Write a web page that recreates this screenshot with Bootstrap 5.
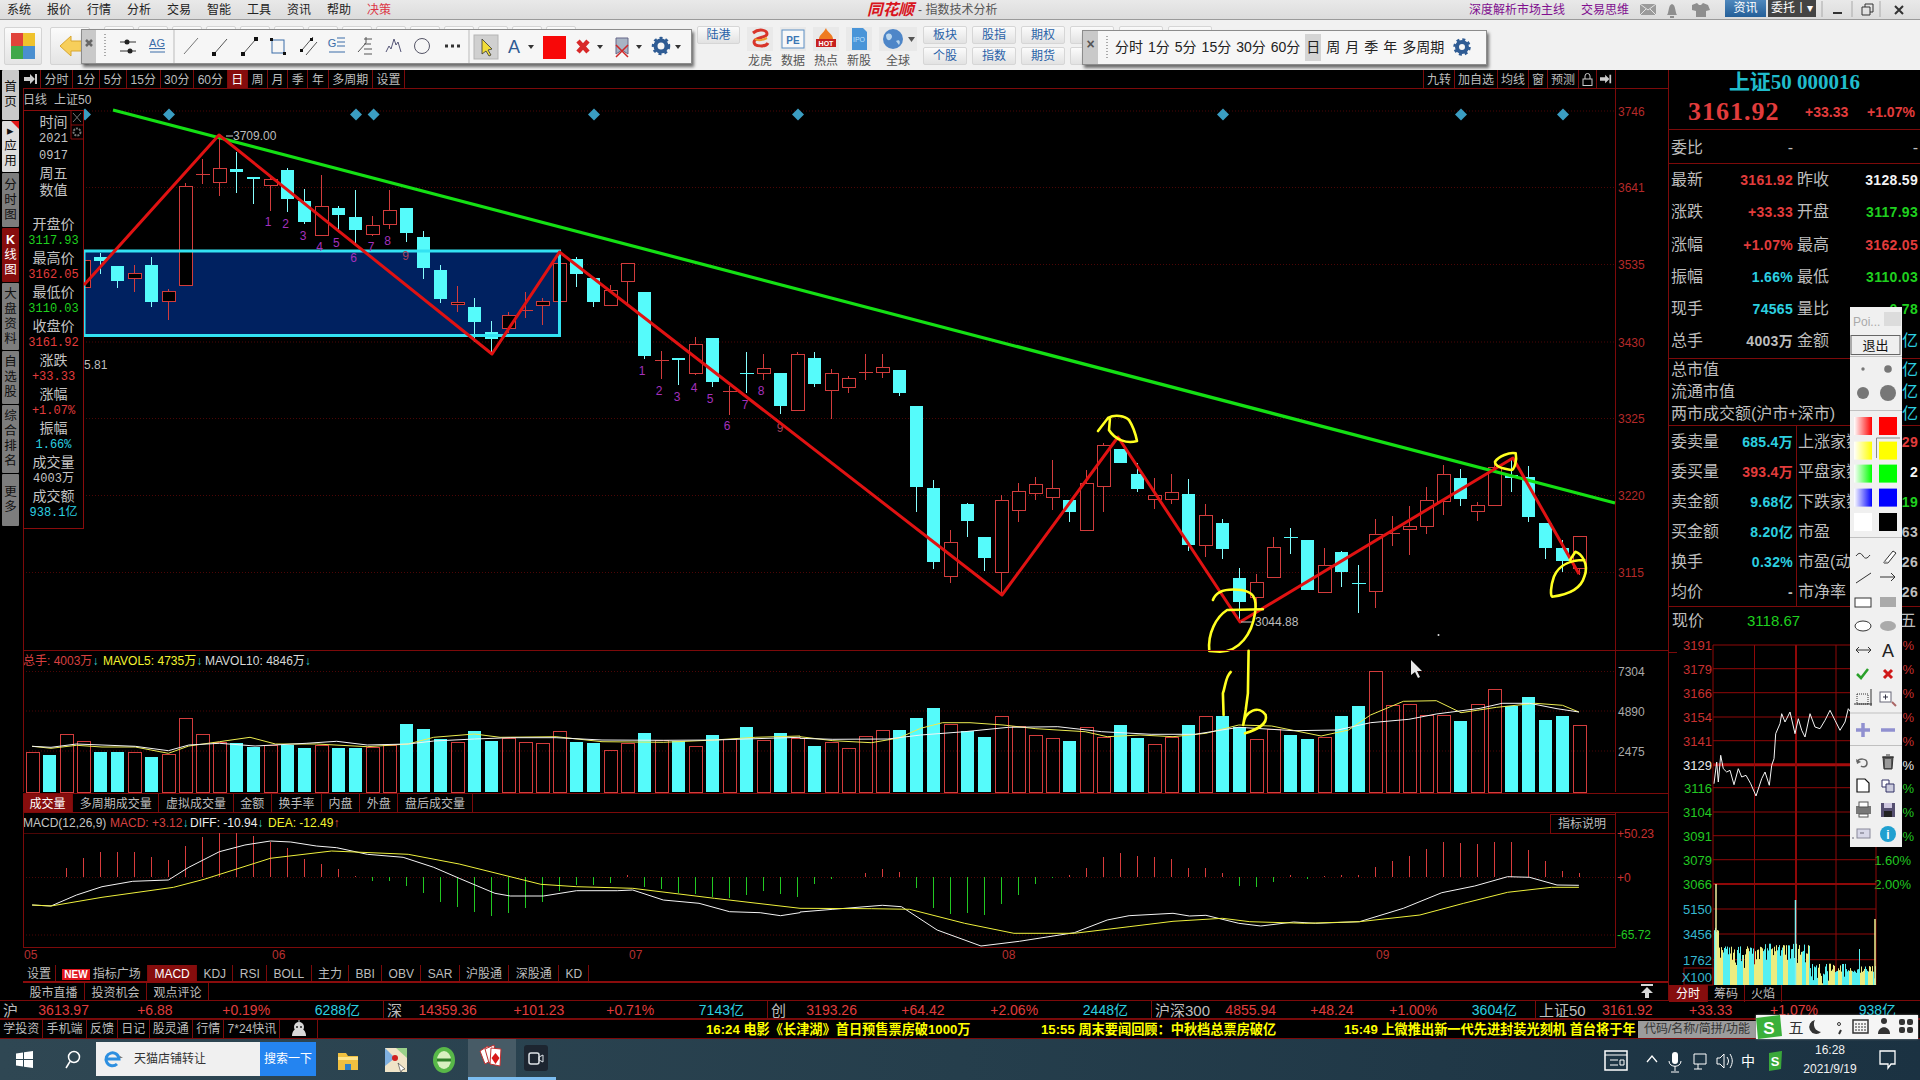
<!doctype html>
<html lang="zh-CN">
<head>
<meta charset="utf-8">
<title>同花顺 - 指数技术分析</title>
<link rel="stylesheet" href="https://cdn.jsdelivr.net/npm/bootstrap@5.3.0/dist/css/bootstrap.min.css">
<style>
:root{--sk-red:#e23c3c;--sk-line:#7c0a0a;--sk-cyan:#2cd0e0;--sk-green:#1fd01f;--sk-grey:#bdbdbd}
html,body{margin:0;height:100%;overflow:hidden;background:#000}
body{font:12px/1.2 "Liberation Sans","Noto Sans CJK SC",sans-serif;color:var(--sk-grey);position:relative}
.sk-shell{width:1920px;height:1080px}
svg{display:block;overflow:visible}
svg text{font-family:"Liberation Sans","Noto Sans CJK SC",sans-serif}
/* menu */
.sk-menu{height:20px;background:linear-gradient(#e9e9e9,#dcdcdc);border-bottom:1px solid #9a9a9a;color:#222;padding-left:7px;line-height:21px}
.sk-menu .sk-mi{width:40px;flex:none}
.sk-title{position:absolute;left:867px;top:0;height:20px;line-height:20px;color:#555;white-space:nowrap;display:flex;align-items:center}
.sk-logo{font:italic bold 15.7px/18px "Liberation Sans","Noto Sans CJK SC",sans-serif;color:#d8141c;margin-right:4px}
.sk-mright{margin-left:auto;color:#800f8f}
.sk-bt-b{width:41px;height:17px;line-height:17px;text-align:center;color:#fff;background:linear-gradient(#4f88bd,#245f98);margin-left:8px}
.sk-bt-d{width:48px;height:17px;line-height:17px;text-align:center;color:#fff;background:#444;margin-left:2px}
/* toolbar */
.sk-tools{height:50px;background:#f1f1f1;position:relative}
.sk-tbtn{border:1px solid #d4d4d4;border-radius:2px;background:linear-gradient(#fbfbfb,#e4e4e4);flex:none}
.sk-sbtn{height:18px;line-height:16px;text-align:center;color:#2a62a8;font-size:12px;background:linear-gradient(#fbfbfb,#e2e2e2);border:1px solid #d6d6d6;border-radius:2px}
.sk-btngrid{display:grid;grid-template-columns:repeat(6,44px);gap:3px 5px}
.sk-icol{width:26px;flex:none;text-align:center;color:#555;line-height:14px}
.sk-icol svg{margin-bottom:3px}
.sk-float{position:absolute;background:#f6f6f6;box-shadow:2px 3px 3px rgba(0,0,0,.55);border:1px solid #8c8c8c;z-index:5}
.sk-fclose{width:15px;background:#c9c9c9;color:#555;font-weight:700;font-size:14px;text-align:center;line-height:26px;flex:none}
.sk-fitem{font-size:14px;color:#222;white-space:nowrap}
.sk-fsel{background:#d4d4d4;padding:5px 1px}
.sk-grip{margin:0 6px 0 8px}
/* side */
.sk-side{width:19px;flex:none}
.sk-vt{width:17px;margin-left:2px;margin-bottom:1px;background:#7d7d7d;color:#111;font-size:12.5px;line-height:15px;text-align:center;display:flex;align-items:center;justify-content:center;border-radius:1px;flex:none;position:relative}
.sk-vt-l{background:#c9c9c9}
.sk-vt-w{background:#dcdcdc}
.sk-vt-w::after{content:"";position:absolute;right:0;top:0;border:4px solid transparent;border-top-color:#e01818;border-right-color:#e01818}
.sk-vt-r{background:#860d0d;color:#fff}
/* tabs */
.sk-center{width:1649px;flex:none;position:relative}
.sk-tabs{height:19px;line-height:18px;margin-left:4px;color:#bdbdbd;white-space:nowrap}
.sk-tabs>span{border-right:1px solid var(--sk-line);display:block;height:100%;flex:none}
.sk-tb-top{border-bottom:1px solid var(--sk-line);line-height:20px}
.sk-tb-top>span{padding:0 3.6px}
.sk-tb-top>span:first-child{padding:0 2px 0 1px}
.sk-tr{margin-left:auto;margin-right:52px;border-left:1px solid var(--sk-line)}
.sk-tr>span{padding:0 3px;border-right:1px solid var(--sk-line)}
.sk-tb-mid{height:20px;border-top:1px solid var(--sk-line);border-bottom:1px solid var(--sk-line);line-height:20px}
.sk-tb-mid>span{padding:0 6.6px}
.sk-tb-low{height:18px;border-bottom:2px solid #8a0c0c}
.sk-tb-low>span{padding:0 6.35px}
.sk-tb-low>span:first-child{padding:0 4px}
.sk-tb-bot{height:17px;line-height:20px}
.sk-tb-bot>span{padding:0 6.5px}
.sk-up{margin-right:13px}
.sk-on{background:#860d0d;color:#fff}
.sk-new{background:#e0141c;color:#fff;font-size:10px;padding:0 2px;margin-right:3px}
/* info box */
.sk-info{position:absolute;left:4px;top:40px;width:61px;height:419px;border:1px solid #8a0c0c;border-left-width:1px;background:#000;z-index:2;text-align:center;padding:3px 0 0 0;font-size:14px;line-height:17px;color:#c4c4c4}
.sk-info div{height:17px;white-space:nowrap}
.sk-info .sk-n{font:12px/17px "Liberation Mono","Noto Sans CJK SC",monospace}
.sk-gap{height:17px}
.sk-cx{position:absolute;right:0;top:0;width:12px;height:28px}
/* right panel */
.sk-panel{width:252px;flex:none;border-left:1px solid var(--sk-line);position:relative;font-size:16px;color:var(--sk-grey)}
.sk-ptitle{height:25px;line-height:25px;text-align:center;font:bold 21px/25px "Liberation Serif","Noto Sans CJK SC",serif;color:#20bccb}
.sk-price{height:35px;border-bottom:1px solid var(--sk-line);color:var(--sk-red);font:bold 14px/38px "Liberation Sans",sans-serif;padding-left:19px;align-items:center}
.sk-bigp{font:bold 26px/38px "Liberation Serif",serif;letter-spacing:1px;width:117px;flex:none}
.sk-hline{border-bottom:1px solid var(--sk-line)}
.sk-qr{height:32.3px;line-height:32px}
.sk-qr1{height:34px;line-height:36px}
.sk-qr3{height:30px;line-height:32px}
.sk-lh{width:127px;flex:none;padding:0 3px 0 2px}
.sk-rh{flex:1;padding:0 2px 0 1px}
.sk-dv{border-left:1px solid var(--sk-line)}
.sk-v{font:bold 14px "Liberation Sans","Noto Sans CJK SC",sans-serif;line-height:inherit;letter-spacing:.3px;white-space:nowrap}
.sk-line22{height:22px;line-height:22px;padding-left:2px}
.sk-red{color:var(--sk-red)}.sk-grn{color:var(--sk-green)}.sk-cy{color:var(--sk-cyan)}.sk-wh{color:#f4f4f4}
.sk-xj{height:25px;line-height:28px;padding-left:3px}
.sk-ptabs{height:17px;line-height:18px;font-size:12px;white-space:nowrap}
.sk-ptabs>span{padding:0 6px;border-right:1px solid var(--sk-line)}
/* ticker */
.sk-tick{height:20px;border-top:1px solid var(--sk-line);border-bottom:2px solid #7a0a0a;font-size:14px;line-height:19px;color:var(--sk-red);white-space:nowrap}
.sk-tg{width:384px;flex:none;border-right:1px solid var(--sk-line);padding-left:3px}
.sk-tg:last-child{border-right:0;width:383px}
.sk-tg>span{flex:1 1 0;text-align:center}
.sk-tg>.sk-tl{flex:none;color:#bdbdbd;font-size:15px;text-align:left}
.sk-news{height:19px;border-bottom:1px solid var(--sk-line);line-height:19px;white-space:nowrap;position:relative}
.sk-nbtn>span{padding:0 3.2px;border-right:1px solid var(--sk-line);height:18px;display:block}
.sk-nitem{color:#ffff00;font-size:13.2px;font-weight:700;position:absolute;top:0}
.sk-code{position:absolute;left:1638px;top:1px;width:215px;height:17px;background:#9c9c9c;color:#333;font-size:12px;line-height:17px;padding-left:6px}
/* task bar */
.sk-task{height:41px;background:linear-gradient(90deg,#2f4753,#253e4c 50%,#1b3242);color:#f1f1f1;position:relative}
.sk-search{width:164px;height:34px;background:#f0f0f0;margin-top:3px;color:#333;line-height:34px;padding-left:38px;flex:none;position:relative}
.sk-sgo{width:56px;height:34px;background:#2484f0;color:#fff;text-align:center;line-height:34px;margin-top:3px;flex:none}
.sk-ticon{width:48px;height:41px;flex:none;display:flex;align-items:center;justify-content:center;position:relative}
.sk-act{background:#475b66;border-bottom:3px solid #7cbdf0}
.sk-und{border-bottom:3px solid #7cbdf0}
.sk-clock{position:absolute;left:1800px;top:2px;width:60px;text-align:center;line-height:19px;font-size:12px}
/* overlays */
.sk-pal{position:absolute;left:1850px;top:307px;width:52px;height:540px;background:#f0f0f0;z-index:6}
.sk-ime{position:absolute;left:1756px;top:1015px;width:162px;height:24px;background:#f5f5f5;z-index:7;box-shadow:0 0 2px #888}
.sk-cur{position:absolute;left:1410px;top:660px;z-index:8}
</style>
</head>
<body>
<div class="sk-shell d-flex flex-column">
  <header class="sk-menu d-flex">
    <span class="sk-mi">系统</span><span class="sk-mi">报价</span><span class="sk-mi">行情</span><span class="sk-mi">分析</span><span class="sk-mi">交易</span><span class="sk-mi">智能</span><span class="sk-mi">工具</span><span class="sk-mi">资讯</span><span class="sk-mi">帮助</span><span class="sk-mi text-danger">决策</span>
    <div class="sk-title"><span class="sk-logo">同花顺</span>- 指数技术分析</div>
    <div class="sk-mright d-flex">
      <span>深度解析市场主线</span><span class="ms-3">交易思维</span>
      <svg class="ms-1" width="84" height="18" viewBox="-5 0 84 18"><rect x="2" y="4" width="16" height="11" fill="#9b9b9b"/><path d="M2 4l8 6 8-6M2 15l6-6M18 15l-6-6" stroke="#e4e4e4" fill="none"/><path d="M29 15c2-2 1-10 5-11 4 1 3 9 5 11zM32 16h4v2h-4z" fill="#8e8e8e"/><path d="M54 5l5-2 2 2h2l2-2 5 2 2 5-4 1v6H58v-6l-4-1z" fill="#8e8e8e"/></svg>
      <span class="sk-bt-b">资讯</span><span class="sk-bt-d">委托丨▾</span>
      <svg width="104" height="19" viewBox="0 0 104 19"><path d="M6 1v16M36 1v16M64 1v16" stroke="#aaa"/><path d="M17 13h9" stroke="#333" stroke-width="2"/><path d="M46 7h8v8h-8zM49 7V4h8v8h-3" fill="none" stroke="#333"/><path d="M79 6l8 8M87 6l-8 8" stroke="#333" stroke-width="2"/></svg>
    </div>
  </header>

  <div class="sk-tools d-flex align-items-start">
    <div class="sk-tbtn d-flex align-items-center justify-content-center" style="width:38px;height:38px;margin:7px 0 0 4px">
      <svg width="24" height="26" viewBox="0 0 24 26"><rect width="12" height="13" fill="#e0433a"/><rect x="12" width="12" height="13" fill="#efc22c"/><rect y="13" width="12" height="13" fill="#3fa84a"/><rect x="12" y="13" width="12" height="13" fill="#4a8fd0"/></svg>
    </div>
    <div class="sk-tbtn d-flex align-items-center ps-2" style="width:40px;height:38px;margin:7px 0 0 8px">
      <svg width="24" height="22" viewBox="0 0 24 22"><path d="M1 11L12 1v5h11v10H12v5z" fill="#f7cf5b" stroke="#d8a630"/></svg>
    </div>
    <div class="d-flex" style="gap:4px;margin:6px 0 0 14px;width:586px">
      <span class="sk-tbtn" style="width:30px;height:30px"></span><span class="sk-tbtn" style="width:30px;height:30px"></span><span class="sk-tbtn" style="width:30px;height:30px"></span><span class="sk-tbtn" style="width:30px;height:30px"></span><span class="sk-tbtn" style="width:30px;height:30px"></span><span class="sk-tbtn" style="width:30px;height:30px"></span><span class="sk-tbtn" style="width:30px;height:30px"></span><span class="sk-tbtn" style="width:30px;height:30px"></span><span class="sk-tbtn" style="width:30px;height:30px"></span><span class="sk-tbtn" style="width:30px;height:30px"></span><span class="sk-tbtn" style="width:30px;height:30px"></span><span class="sk-tbtn" style="width:30px;height:30px"></span><span class="sk-tbtn" style="width:30px;height:30px"></span><span class="sk-tbtn" style="width:30px;height:30px"></span>
    </div>
    <div class="sk-sbtn" style="width:43px;margin:6px 0 0 7px">陆港</div>
    <div class="d-flex" style="gap:7px;margin:7px 0 0 7px">
      <div class="sk-icol"><svg width="26" height="24" viewBox="0 0 26 24"><rect width="26" height="24" fill="#e9e9e9"/><path d="M6 6c6-5 14-3 14 1s-13 3-13 8 12 5 14 1" fill="none" stroke="#d8352a" stroke-width="3"/><path d="M8 12c4 3 10 0 12-1" stroke="#eda030" stroke-width="2" fill="none"/></svg>龙虎</div>
      <div class="sk-icol"><svg width="26" height="24" viewBox="0 0 26 24"><rect width="26" height="24" fill="#e9e9e9"/><rect x="2" y="3" width="22" height="18" fill="#f8f8f8" stroke="#5d8fc4"/><text x="13" y="17" text-anchor="middle" font-size="10" font-weight="700" fill="#3a76b4">PE</text></svg>数据</div>
      <div class="sk-icol"><svg width="26" height="24" viewBox="0 0 26 24"><rect width="26" height="24" fill="#e9e9e9"/><path d="M13 1c1 4 7 6 7 11H6c0-4 4-5 7-11z" fill="#ef7b22"/><rect x="3" y="12" width="20" height="8" fill="#c7201e"/><text x="13" y="19" text-anchor="middle" font-size="7" font-weight="700" fill="#fff">HOT</text></svg>热点</div>
      <div class="sk-icol"><svg width="26" height="24" viewBox="0 0 26 24"><rect width="26" height="24" fill="#e9e9e9"/><path d="M6 1h11l4 4v18H6z" fill="#4a95d8"/><text x="13" y="15" text-anchor="middle" font-size="7" fill="#bfe3ff">IPO</text></svg>新股</div>
      <div class="sk-icol" style="width:38px"><svg width="38" height="24" viewBox="0 0 38 24"><rect width="38" height="24" fill="#e9e9e9"/><circle cx="14" cy="12" r="10" fill="#4e86c8"/><path d="M7 8c4-4 8 1 5 4s-5 0-5-4zM17 14c3-2 5 0 3 4z" fill="#b9d6ee"/><path d="M29 10h7l-3.500 5z" fill="#555"/></svg>全球</div>
    </div>
    <div class="sk-btngrid" style="margin:6px 0 0 6px">
      <span class="sk-sbtn">板块</span><span class="sk-sbtn">股指</span><span class="sk-sbtn">期权</span><span class="sk-sbtn"></span><span class="sk-sbtn"></span><span class="sk-sbtn"></span>
      <span class="sk-sbtn">个股</span><span class="sk-sbtn">指数</span><span class="sk-sbtn">期货</span><span class="sk-sbtn"></span><span class="sk-sbtn"></span><span class="sk-sbtn"></span>
    </div>
  </div>

  <main class="d-flex" style="height:930px">
    <nav class="sk-side d-flex flex-column">
      <div class="sk-vt sk-vt-l" style="height:50px">首<br>页</div>
      <div class="sk-vt sk-vt-w" style="height:51px"><span>▸<br>应<br>用</span></div>
      <div class="sk-vt" style="height:54px">分<br>时<br>图</div>
      <div class="sk-vt sk-vt-r" style="height:54px"><span><b>K</b><br>线<br>图</span></div>
      <div class="sk-vt" style="height:67px">大<br>盘<br>资<br>料</div>
      <div class="sk-vt" style="height:53px">自<br>选<br>股</div>
      <div class="sk-vt" style="height:68px">综<br>合<br>排<br>名</div>
      <div class="sk-vt" style="height:52px">更<br>多</div>
    </nav>

    <section class="sk-center d-flex flex-column">
      <div class="sk-tabs sk-tb-top d-flex">
        <span class="d-flex align-items-center"><svg width="14" height="10" viewBox="0 0 14 10"><path d="M0 3h6V0l5 5-5 5V7H0z" fill="#ccc"/><rect x="11" width="2" height="10" fill="#ccc"/></svg></span>
        <span>分时</span><span>1分</span><span>5分</span><span>15分</span><span>30分</span><span>60分</span><span class="sk-on">日</span><span>周</span><span>月</span><span>季</span><span>年</span><span>多周期</span><span>设置</span>
        <div class="sk-tr d-flex">
          <span>九转</span><span>加自选</span><span>均线</span><span>窗</span><span>预测</span>
          <span class="d-flex align-items-center"><svg width="11" height="13" viewBox="0 0 11 13"><rect x="1" y="6" width="9" height="6.500" fill="none" stroke="#ccc"/><path d="M3 6V3a2.500 2.500 0 0 1 5 0v3" fill="none" stroke="#ccc"/></svg></span>
          <span class="d-flex align-items-center"><svg width="12" height="10" viewBox="0 0 14 10"><path d="M0 3h6V0l5 5-5 5V7H0z" fill="#ccc"/><rect x="11" width="2" height="10" fill="#ccc"/></svg></span>
        </div>
      </div>
      <svg id="kl" width="1649" height="561" viewBox="19 89 1649 561"></svg>
      <svg id="vl" width="1649" height="143" viewBox="19 650 1649 143"></svg>
      <div class="sk-tabs sk-tb-mid d-flex">
        <span class="sk-on">成交量</span><span>多周期成交量</span><span>虚拟成交量</span><span>金额</span><span>换手率</span><span>内盘</span><span>外盘</span><span>盘后成交量</span>
      </div>
      <svg id="mc" width="1649" height="152" viewBox="19 813 1649 152"></svg>
      <div class="sk-tabs sk-tb-low d-flex">
        <span>设置</span><span><b class="sk-new">NEW</b>指标广场</span><span class="sk-on">MACD</span><span>KDJ</span><span>RSI</span><span>BOLL</span><span>主力</span><span>BBI</span><span>OBV</span><span>SAR</span><span>沪股通</span><span>深股通</span><span>KD</span>
      </div>
      <div class="sk-tabs sk-tb-bot d-flex">
        <span>股市直播</span><span>投资机会</span><span>观点评论</span>
        <svg class="ms-auto sk-up" width="16" height="16" viewBox="0 0 16 16"><path d="M2 1h12v2H2zM8 4l6 6h-4v5H6v-5H2z" fill="#d8d8d8"/></svg>
      </div>
      <div class="sk-info">
        <div>时间</div><div class="sk-n">2021</div><div class="sk-n">0917</div><div>周五</div><div>数值</div><div class="sk-gap"></div>
        <div>开盘价</div><div class="sk-n sk-grn">3117.93</div><div>最高价</div><div class="sk-n sk-red">3162.05</div><div>最低价</div><div class="sk-n sk-grn">3110.03</div><div>收盘价</div><div class="sk-n sk-red">3161.92</div><div>涨跌</div><div class="sk-n sk-red">+33.33</div><div>涨幅</div><div class="sk-n sk-red">+1.07%</div><div>振幅</div><div class="sk-n sk-cy">1.66%</div><div>成交量</div><div class="sk-n">4003万</div><div>成交额</div><div class="sk-n sk-cy">938.1亿</div>
        <svg class="sk-cx" viewBox="0 0 12 28"><path d="M2 2l8 9M10 2l-8 9" stroke="#777"/><circle cx="6" cy="21" r="3.500" fill="none" stroke="#777" stroke-width="2" stroke-dasharray="2 1"/><path d="M0 0v28h12M0 14h12" fill="none" stroke="#8a0c0c"/></svg>
      </div>
    </section>

    <aside class="sk-panel d-flex flex-column">
      <div class="sk-ptitle">上证50 000016</div>
      <div class="sk-price d-flex"><span class="sk-bigp">3161.92</span><span style="width:62px;flex:none">+33.33</span><span>+1.07%</span></div>
      <div class="sk-qr1 d-flex sk-hline"><div class="sk-lh d-flex justify-content-between"><span>委比</span><span>-</span></div><div class="sk-rh d-flex justify-content-end"><span>-</span></div></div>
      <div class="sk-hline">
        <div class="sk-qr d-flex"><div class="sk-lh d-flex justify-content-between"><span>最新</span><span class="sk-v sk-red">3161.92</span></div><div class="sk-rh d-flex justify-content-between"><span>昨收</span><span class="sk-v sk-wh">3128.59</span></div></div>
        <div class="sk-qr d-flex"><div class="sk-lh d-flex justify-content-between"><span>涨跌</span><span class="sk-v sk-red">+33.33</span></div><div class="sk-rh d-flex justify-content-between"><span>开盘</span><span class="sk-v sk-grn">3117.93</span></div></div>
        <div class="sk-qr d-flex"><div class="sk-lh d-flex justify-content-between"><span>涨幅</span><span class="sk-v sk-red">+1.07%</span></div><div class="sk-rh d-flex justify-content-between"><span>最高</span><span class="sk-v sk-red">3162.05</span></div></div>
        <div class="sk-qr d-flex"><div class="sk-lh d-flex justify-content-between"><span>振幅</span><span class="sk-v sk-cy">1.66%</span></div><div class="sk-rh d-flex justify-content-between"><span>最低</span><span class="sk-v sk-grn">3110.03</span></div></div>
        <div class="sk-qr d-flex"><div class="sk-lh d-flex justify-content-between"><span>现手</span><span class="sk-v sk-cy">74565</span></div><div class="sk-rh d-flex justify-content-between"><span>量比</span><span class="sk-v sk-grn">0.78</span></div></div>
        <div class="sk-qr d-flex"><div class="sk-lh d-flex justify-content-between"><span>总手</span><span class="sk-v">4003万</span></div><div class="sk-rh d-flex justify-content-between"><span>金额</span><span class="sk-cy">亿</span></div></div>
      </div>
      <div class="sk-hline">
        <div class="sk-line22 d-flex justify-content-between"><span>总市值</span><span class="sk-cy" style="padding-right:2px">亿</span></div>
        <div class="sk-line22 d-flex justify-content-between"><span>流通市值</span><span class="sk-cy" style="padding-right:2px">亿</span></div>
        <div class="sk-line22 d-flex justify-content-between"><span>两市成交额(沪市+深市)</span><span class="sk-cy" style="padding-right:2px">亿</span></div>
      </div>
      <div class="sk-hline">
        <div class="sk-qr3 d-flex"><div class="sk-lh d-flex justify-content-between"><span>委卖量</span><span class="sk-v sk-cy">685.4万</span></div><div class="sk-rh sk-dv d-flex justify-content-between"><span>上涨家数</span><span class="sk-v sk-red">29</span></div></div>
        <div class="sk-qr3 d-flex"><div class="sk-lh d-flex justify-content-between"><span>委买量</span><span class="sk-v sk-red">393.4万</span></div><div class="sk-rh sk-dv d-flex justify-content-between"><span>平盘家数</span><span class="sk-v sk-wh">2</span></div></div>
        <div class="sk-qr3 d-flex"><div class="sk-lh d-flex justify-content-between"><span>卖金额</span><span class="sk-v sk-cy">9.68亿</span></div><div class="sk-rh sk-dv d-flex justify-content-between"><span>下跌家数</span><span class="sk-v sk-grn">19</span></div></div>
        <div class="sk-qr3 d-flex"><div class="sk-lh d-flex justify-content-between"><span>买金额</span><span class="sk-v sk-cy">8.20亿</span></div><div class="sk-rh sk-dv d-flex justify-content-between"><span>市盈</span><span class="sk-v">63</span></div></div>
        <div class="sk-qr3 d-flex"><div class="sk-lh d-flex justify-content-between"><span>换手</span><span class="sk-v sk-cy">0.32%</span></div><div class="sk-rh sk-dv d-flex justify-content-between"><span>市盈(动)</span><span class="sk-v">26</span></div></div>
        <div class="sk-qr3 d-flex"><div class="sk-lh d-flex justify-content-between"><span>均价</span><span class="sk-v">-</span></div><div class="sk-rh sk-dv d-flex justify-content-between"><span>市净率</span><span class="sk-v">26</span></div></div>
      </div>
      <div class="sk-xj d-flex"><span>现价</span><span class="sk-grn" style="margin-left:43px;font-size:15px">3118.67</span><span class="ms-auto pe-1">五</span></div>
      <svg id="fs" width="251" height="353" viewBox="1669 630 251 353"></svg>
      <div class="sk-ptabs d-flex"><span class="sk-on" style="width:39px;padding:0 7px">分时</span><span>筹码</span><span>火焰</span></div>
    </aside>
  </main>

  <div class="sk-tick d-flex">
    <div class="sk-tg d-flex"><span class="sk-tl">沪</span><span>3613.97</span><span>+6.88</span><span>+0.19%</span><span class="sk-cy">6288亿</span></div>
    <div class="sk-tg d-flex"><span class="sk-tl">深</span><span>14359.36</span><span>+101.23</span><span>+0.71%</span><span class="sk-cy">7143亿</span></div>
    <div class="sk-tg d-flex"><span class="sk-tl">创</span><span>3193.26</span><span>+64.42</span><span>+2.06%</span><span class="sk-cy">2448亿</span></div>
    <div class="sk-tg d-flex"><span class="sk-tl">沪深300</span><span>4855.94</span><span>+48.24</span><span>+1.00%</span><span class="sk-cy">3604亿</span></div>
    <div class="sk-tg d-flex"><span class="sk-tl">上证50</span><span>3161.92</span><span>+33.33</span><span>+1.07%</span><span class="sk-cy">938亿</span></div>
  </div>
  <div class="sk-news">
    <div class="sk-nbtn d-flex" style="width:318px"><span>学投资</span><span>手机端</span><span>反馈</span><span>日记</span><span>股灵通</span><span>行情</span><span>7*24快讯</span><span class="flex-grow-1"><svg width="24" height="17" viewBox="0 0 24 17" class="mx-auto"><path d="M5 16c0-5 3-8 7-8s7 3 7 8z" fill="#d8d8d8"/><circle cx="12" cy="7" r="5" fill="#d8d8d8"/><circle cx="10" cy="7" r="1" fill="#222"/><circle cx="14" cy="7" r="1" fill="#222"/><path d="M12 0v2" stroke="#d8d8d8"/></svg></span></div>
    <span class="sk-nitem" style="left:706px">16:24 电影《长津湖》首日预售票房破1000万</span>
    <span class="sk-nitem" style="left:1041px">15:55 周末要闻回顾：中秋档总票房破亿</span>
    <span class="sk-nitem" style="left:1344px">15:49 上微推出新一代先进封装光刻机 首台将于年</span>
    <div class="sk-code">代码/名称/简拼/功能</div>
  </div>
  <footer class="sk-task d-flex">
    <div class="d-flex align-items-center justify-content-center" style="width:48px"><svg width="17" height="17" viewBox="0 0 17 17"><path d="M0 2.500l7-1v6.500H0zM8 1.300l9-1.300v8H8zM0 9h7v6.500l-7-1zM8 9h9v8l-9-1.300z" fill="#fff"/></svg></div>
    <div class="d-flex align-items-center justify-content-center" style="width:48px"><svg width="17" height="20" viewBox="0 0 17 20"><circle cx="10" cy="7" r="5.500" fill="none" stroke="#fff" stroke-width="1.500"/><path d="M6 11.500L2 18" stroke="#fff" stroke-width="1.500"/></svg></div>
    <div class="sk-search">天猫店铺转让<svg class="position-absolute" style="left:6px;top:7px" width="24" height="20" viewBox="0 0 24 20"><path d="M4 10h13a6.500 6.500 0 1 0-2 5" fill="none" stroke="#2d8fe0" stroke-width="3"/><path d="M21 9h-3v-2z" fill="#777"/></svg></div>
    <div class="sk-sgo">搜索一下</div>
    <div class="ms-1"></div>
    <div class="sk-ticon ms-1"><svg width="24" height="24" viewBox="0 0 24 24"><path d="M2 5h8l2 3h10v14H2z" fill="#f0c040"/><rect x="2" y="9" width="20" height="3" fill="#ffe48a"/><rect x="9" y="16" width="6" height="6" fill="#2f80c8"/></svg></div>
    <div class="sk-ticon"><svg width="24" height="28" viewBox="0 0 24 28"><path d="M1 2h22v24H1z" fill="#f0e4c8"/><path d="M1 2l10 10-10 8z" fill="#7fb0e0"/><path d="M12 2h11v10z" fill="#9ad08a"/><circle cx="11" cy="12" r="3" fill="#d02020"/><path d="M14 17l7 6-3 1-1 3z" fill="#fff" stroke="#333" stroke-width=".6"/></svg></div>
    <div class="sk-ticon"><svg width="24" height="28" viewBox="0 0 24 28"><ellipse cx="12" cy="14" rx="11" ry="13" fill="#58b848"/><ellipse cx="12" cy="14" rx="7" ry="9" fill="#d8f0c0"/><path d="M5 14h14" stroke="#2f8028" stroke-width="3"/></svg></div>
    <div class="sk-ticon sk-act"><svg width="26" height="28" viewBox="0 0 26 28"><path d="M1 7l8-5 4 14-7 4z" fill="#fff" stroke="#c03030"/><path d="M6 5l9-4 3 15-8 3z" fill="#fff" stroke="#c03030"/><path d="M12 4l10 1-1 17-10-2z" fill="#fff" stroke="#c03030"/><path d="M16.500 9l4 5-4 6-4-6z" fill="#d81818"/></svg></div>
    <div class="sk-ticon sk-und" style="width:40px"><svg width="24" height="26" viewBox="0 0 24 26"><rect width="24" height="26" rx="3" fill="#1d2530"/><rect x="5" y="8" width="10" height="11" rx="2" fill="none" stroke="#dfe4e8" stroke-width="1.500"/><path d="M15 12l4-2v7l-4-2z" fill="none" stroke="#dfe4e8"/></svg></div>
    <svg class="position-absolute" style="left:1604px;top:0" width="180" height="41" viewBox="1604 1039 180 41"><rect x="1605" y="1051" width="22" height="19" fill="none" stroke="#fff" stroke-width="1.500"/><path d="M1605 1055h22M1610 1060h8M1610 1065h8M1620 1060h4v5h-4z" fill="none" stroke="#fff"/><path d="M1647 1062l5-6 5 6" fill="none" stroke="#fff" stroke-width="1.300"/><rect x="1672" y="1052" width="6" height="12" rx="3" fill="#fff"/><path d="M1669 1061c0 7 12 7 12 0M1675 1066v5M1671 1072h8" fill="none" stroke="#fff"/><path d="M1694 1054h12v10h-12zM1698 1064v5M1694 1069h8" fill="none" stroke="#fff"/><path d="M1717 1058h3l4-4v14l-4-4h-3zM1727 1057c2 3 2 5 0 8M1730 1054c3 5 3 9 0 14" fill="none" stroke="#fff"/><text x="1748" y="1066" text-anchor="middle" font-size="14" fill="#fff">中</text><path d="M1769 1053l13-2-1 18-12 2z" fill="#3aa83a"/><text x="1775" y="1066" text-anchor="middle" font-size="13" font-weight="700" fill="#fff">S</text></svg>
    <div class="sk-clock">16:28<br>2021/9/19</div>
    <svg class="position-absolute" style="left:1878px;top:11px" width="20" height="20" viewBox="0 0 20 20"><path d="M2 1h15v13h-4l-3 4v-4H2z" fill="none" stroke="#fff" stroke-width="1.300"/></svg>
  </footer>
</div>

<!-- floating drawing toolbar -->
<div class="sk-float" style="left:81px;top:29px;width:611px;height:35px">
<svg width="609" height="33" viewBox="82 30 609 33">
<rect x="82" y="30" width="14" height="33" fill="#c9c9c9"/><path d="M86 46l6 6M92 46l-6 6" stroke="#666" stroke-width="2.500" transform="translate(0,-6)"/>
<path d="M105 34v24" stroke="#aaa" stroke-dasharray="1 2" stroke-width="2"/>
<path d="M120 42h16M120 51h16" stroke="#333"/><circle cx="127" cy="42" r="2.500" fill="#222"/><circle cx="130" cy="51" r="2.500" fill="#222"/>
<text x="157" y="47" text-anchor="middle" font-size="11" fill="#3a6ca8" text-decoration="underline">AG</text><path d="M150 52h15" stroke="#3a6ca8"/>
<path d="M174 30v33" stroke="#bbb"/>
<path d="M184 54l14-16" stroke="#777"/>
<path d="M214 54l13-15" stroke="#555"/><rect x="212" y="52" width="4" height="4" fill="#111"/>
<path d="M243 54l13-15" stroke="#555"/><rect x="241" y="52" width="4" height="4" fill="#111"/><rect x="254" y="37" width="4" height="4" fill="#111"/>
<rect x="272" y="40" width="12" height="13" fill="none" stroke="#3a6ca8"/><rect x="270" y="38" width="3" height="3" fill="#111"/><rect x="283" y="52" width="3" height="3" fill="#111"/>
<path d="M302 50l11-13M306 55l11-13" stroke="#555"/><rect x="300" y="49" width="3" height="3" fill="#111"/><rect x="310" y="38" width="3" height="3" fill="#111"/>
<text x="332" y="47" text-anchor="middle" font-size="11" fill="#3a6ca8">G</text><path d="M337 38h8M337 42h8M337 46h8M329 52h16" stroke="#3a6ca8"/>
<path d="M358 52l8-9v-6M364 39h8M364 44h7M364 49h8M364 54h8" stroke="#555" fill="none"/>
<path d="M386 52l3-6 2 3 3-10 2 6 2-3 3 10" stroke="#557" fill="none"/>
<circle cx="422" cy="46" r="7.500" fill="none" stroke="#556"/>
<path d="M445 46h3M451 46h3M457 46h3" stroke="#333" stroke-width="3"/>
<path d="M469 30v33" stroke="#bbb"/>
<rect x="474" y="35" width="24" height="24" fill="#d0d0d0" stroke="#b4b4b4"/><path d="M482 39l0 15 4-3 3 5 2-1-3-5 4-1z" fill="#f1dc38" stroke="#333" stroke-width=".8"/>
<text x="514" y="53" text-anchor="middle" font-size="18" font-family="Liberation Serif" fill="#2f5c94">A</text><path d="M528 45h6l-3 4z" fill="#333"/>
<rect x="543" y="36" width="23" height="23" fill="#f80808"/>
<path d="M578 41l10 11M588 41l-10 11" stroke="#d82828" stroke-width="4.500"/><path d="M597 45h6l-3 4z" fill="#333"/>
<path d="M616 38h12v16l-6-4-6 4z" fill="#a8b4c4" stroke="#668"/><path d="M616 45l12 12M628 45l-12 12" stroke="#d02828" stroke-width="1.500"/><path d="M636 45h6l-3 4z" fill="#333"/>
<circle cx="661" cy="46" r="5.500" fill="none" stroke="#2f5c94" stroke-width="4" /><circle cx="661" cy="46" r="8" fill="none" stroke="#2f5c94" stroke-width="2.500" stroke-dasharray="3 3"/><path d="M675 45h6l-3 4z" fill="#333"/>
</svg></div>

<!-- floating period toolbar -->
<div class="sk-float d-flex align-items-center" style="left:1082px;top:30px;width:405px;height:35px">
  <div class="sk-fclose align-self-stretch">×</div>
  <svg class="sk-grip" width="3" height="24"><path d="M1 0v24" stroke="#aaa" stroke-dasharray="1 2" stroke-width="2"/></svg>
  <div class="d-flex align-items-center" style="gap:5px">
    <span class="sk-fitem">分时</span><span class="sk-fitem">1分</span><span class="sk-fitem">5分</span><span class="sk-fitem">15分</span><span class="sk-fitem">30分</span><span class="sk-fitem">60分</span><span class="sk-fitem sk-fsel">日</span><span class="sk-fitem">周</span><span class="sk-fitem">月</span><span class="sk-fitem">季</span><span class="sk-fitem">年</span><span class="sk-fitem">多周期</span>
    <svg class="ms-1" width="18" height="18" viewBox="0 0 18 18"><circle cx="9" cy="9" r="5" fill="none" stroke="#2f5c94" stroke-width="4"/><circle cx="9" cy="9" r="7.500" fill="none" stroke="#2f5c94" stroke-width="2.500" stroke-dasharray="3 2.900"/></svg>
  </div>
</div>

<!-- paint palette -->
<div class="sk-pal"><svg width="52" height="540" viewBox="1850 307 52 540" id="pal"></svg></div>

<!-- input-method bar -->
<div class="sk-ime d-flex align-items-center">
  <svg width="162" height="24" viewBox="1756 1015 162 24">
  <path d="M1756 1018l24-3 2 21-24 3z" fill="#3ab03a"/><text x="1769" y="1034" text-anchor="middle" font-size="17" font-weight="700" fill="#fff">S</text>
  <text x="1796" y="1033" text-anchor="middle" font-size="15" fill="#333">五</text>
  <path d="M1815 1020a7 7 0 1 0 6 12 8 8 0 0 1-6-12z" fill="#333"/><circle cx="1839" cy="1024" r="1.500" fill="none" stroke="#333"/><path d="M1841 1030l-2 4" stroke="#333" stroke-width="2"/>
  <rect x="1853" y="1020" width="15" height="13" fill="none" stroke="#333" stroke-width="1.500"/><path d="M1855 1024h11M1855 1027h11M1855 1030h11" stroke="#333" stroke-dasharray="2 1"/>
  <circle cx="1884" cy="1021" r="3" fill="#333"/><path d="M1878 1034c0-9 12-9 12 0z" fill="#333"/>
  <rect x="1899" y="1019" width="6" height="6" rx="2" fill="#333"/><rect x="1907" y="1019" width="6" height="6" rx="2" fill="#333"/><rect x="1899" y="1027" width="6" height="6" rx="2" fill="#333"/><rect x="1907" y="1027" width="6" height="6" rx="2" fill="#333"/>
  </svg>
</div>

<svg class="sk-cur" width="16" height="18" viewBox="0 0 16 18"><path d="M1 0v15l4-3 3 6 2-1-3-6h5z" fill="#e8e8e8"/></svg>

<script src="https://cdn.jsdelivr.net/npm/bootstrap@5.3.0/dist/js/bootstrap.bundle.min.js"></script>
<script>
(function(){
const CY='#55fbfb',RD='#d23c3c',LN='#7c0a0a',DOT='#4c0606';
const X=i=>Math.round(100.3+17*i);
const T=(x,y,s,c,o)=>`<text x="${x}" y="${y}" fill="${c}" font-size="${(o&&o.fs)||12}" ${(o&&o.a)?`text-anchor="${o.a}"`:''}>${s}</text>`;
const PL=(p,c,w)=>`<polyline points="${p.map(q=>q.join(',')).join(' ')}" fill="none" stroke="${c}" stroke-width="${w}" stroke-linejoin="round"/>`;
const H=(x1,x2,y,c,d)=>`<path d="M${x1} ${y}H${x2}" stroke="${c}" ${d?`stroke-dasharray="${d}"`:''}/>`;
const V=(x,y1,y2,c,w)=>`<path d="M${x} ${y1}V${y2}" stroke="${c}" stroke-width="${w||1}"/>`;

const C=[[260,260,287,290,'r'],[253,257,261,274,'c'],[266,266,281,288,'c'],[265,273,278,292,'r'],[257,265,302,307,'c'],[289,291,301,320,'r'],[183,186,285,285,'r'],[159,174,174,184,'r'],[136,168,182,196,'r'],[152,169,172,193,'c'],[177,177,179,204,'c'],[178,179,185,211,'r'],[168,170,199,212,'c'],[189,201,222,224,'c'],[175,206,235,235,'r'],[206,208,215,230,'c'],[190,217,230,245,'c'],[216,225,234,236,'r'],[190,210,224,229,'r'],[208,208,233,242,'c'],[231,237,268,279,'c'],[265,270,299,303,'c'],[286,302,304,312,'r'],[298,307,322,342,'c'],[321,332,339,353,'c'],[312,315,328,333,'r'],[292,310,310,318,'r'],[298,301,305,325,'r'],[260,263,301,301,'r'],[257,259,274,287,'c'],[278,278,302,307,'c'],
[285,290,305,305,'r'],[263,263,281,304,'r'],[292,292,356,359,'c'],[351,360,360,379,'r'],[358,358,360,385,'c'],[337,344,373,375,'r'],[338,338,382,387,'c'],[386,391,391,415,'r'],[352,373,373,393,'c'],[354,368,373,380,'r'],[373,373,406,414,'c'],[352,354,410,410,'r'],[352,358,384,387,'c'],[369,373,390,419,'r'],[376,378,387,393,'r'],[354,372,372,380,'r'],[354,367,372,378,'r'],[370,370,393,396,'c'],[406,406,487,512,'c'],[480,488,562,569,'c'],[530,542,576,583,'r'],[503,504,521,537,'c'],[537,537,558,571,'c'],[495,500,572,595,'r'],[483,491,510,522,'r'],[477,484,493,500,'r'],[460,488,497,510,'r'],[500,500,512,522,'c'],[470,483,530,530,'r'],[443,445,486,512,'r'],[449,449,463,463,'c'],
[463,474,489,492,'c'],[478,495,499,509,'r'],[474,492,499,504,'r'],[479,494,545,551,'c'],[504,515,545,557,'r'],[519,523,549,559,'c'],[568,578,602,623,'c'],[574,582,597,607,'r'],[537,547,577,577,'r'],[528,537,537,554,'c'],[540,540,590,590,'c'],[548,565,592,592,'r'],[551,552,572,587,'c'],[565,583,583,613,'c'],[519,534,591,608,'r'],[516,533,533,546,'r'],[506,526,529,555,'r'],[487,500,526,534,'r'],[465,474,501,515,'r'],[469,478,499,506,'c'],[502,505,511,521,'r'],[463,467,505,505,'r'],[460,475,478,492,'c'],[466,477,517,522,'c'],[523,523,548,559,'c'],[540,548,561,572,'c'],[536,536,568,575,'r']];

const p6=s=>s.replace(/(-?[\d.]+),(-?[\d.]+)/g,(m,a,b)=>(+(1120+a/2.8).toFixed(1))+','+(+(400+b/3).toFixed(1)));
const pen=d=>`<path d="${d}" fill="none" stroke="#ffff20" stroke-width="2.600" stroke-linecap="round" stroke-linejoin="round"/>`;

let k='';
k+=T(23,104,'日线<tspan x="54">上证50</tspan>','#bdbdbd');
[[111,'3746'],[187.5,'3641'],[264.5,'3535'],[342,'3430'],[418.5,'3325'],[495.5,'3220'],[572.5,'3115']].forEach(a=>{k+=H(23,1615,a[0],DOT,'1 2');k+=T(1618,a[0]+4.5,a[1],'#b42a2a')});
k+=V(23.5,89,650,LN)+V(1615.5,89,650,LN);
[85,169,356,373.600,594,798,1223,1461,1563].forEach(x=>{k+=`<path d="M${x} 108.500l6 6-6 6-6-6z" fill="#3b9dc2"/>`});
k+=`<rect x="84" y="251" width="475.500" height="84.500" fill="#002160"/>`;
C.forEach((c,n)=>{const x=X(n-1)+.5,[h,t,b,l,ty]=c,col=ty=='c'?CY:RD;
  let s='<g shape-rendering="crispEdges">';
  s+=V(x,h,l,ty=='c'?'#88ffff':RD);
  if(t==b)s+=H(x-7,x+7,t+.5,col);else if(ty=='c')s+=`<rect x="${x-6.500}" y="${t}" width="13" height="${b-t}" fill="${CY}"/>`;
  else s+=`<rect x="${x-6.500}" y="${t+.5}" width="13" height="${b-t}" fill="#000" stroke="${RD}"/>`;
  k+=s+'</g>';});
k+=`<rect x="84" y="251" width="475.500" height="84.500" fill="none" stroke="#33e2f2" stroke-width="3"/>`;
[[268,222,1],[285.500,224,2],[303,236,3],[319.600,247,4],[336.400,243,5],[353.600,258,6],[371,247,7],[387.700,241,8],[405.600,256,9],[642,371,1],[659,391,2],[677,397,3],[694,387.500,4],[710,399,5],[727,426,6],[745,405,7],[761,391,8],[780,427.500,9]].forEach(a=>{k+=T(a[0],a[1]+4,a[2],a[2]==9?'#a8405a':'#a431bc',{a:'middle'})});
k+=`<path d="M113 110L1615 503" stroke="#14e014" stroke-width="3.200"/>`;
k+=PL([[84,285],[219,135],[492,354],[559.500,252],[1002,595],[1118,437],[1240,622],[1513,458],[1579,574]],'#e01212',3);
k+=H(226,233,136,'#ccc')+T(233,140,'3709.00','#bdbdbd');
k+=H(1241,1254,622,'#ccc')+T(1255,626,'3044.88','#bdbdbd');
k+=T(84,369,'5.81','#bdbdbd');
k+=pen(p6('M260,600 C270,570 300,565 340,570 C370,575 385,590 378,640 C370,700 335,755 280,755 L250,753 C245,700 270,650 300,630 L400,628'));
k+=pen(p6('M1050,185 C1060,170 1090,155 1108,160 C1112,180 1105,210 1095,210 C1070,205 1050,200 1050,185'));
k+=pen(p6('M1300,480 C1270,480 1230,490 1215,530 C1205,560 1205,585 1210,590 C1250,585 1290,570 1300,530 C1315,490 1290,460 1275,455 L1260,480'));
k+=pen('M1098,431 L1108,418 C1115,414 1125,416 1129,420 C1134,428 1136,436 1137,441 C1127,444 1115,440 1109,430 L1110,418');
k+=`<circle cx="1438.500" cy="635" r="1" fill="#ddd"/>`;
document.getElementById('kl').innerHTML=k;

const VOL=[337,345,283,304,336,336,336,351,341,235,283,305,309,321,314,314,324,315,324,324,321,314,252,267,297,306,273,303,294,307,310,273,306,309,331,310,279,300,303,318,285,297,261,300,279,294,
318,306,324,289,270,270,234,204,252,273,291,229,258,285,294,303,261,291,255,294,312,291,255,229,228,261,297,267,285,297,291,228,198,94,195,192,225,225,243,192,148,198,171,240,228,256];
const cyanIdx=new Set([-3,0,1,3,8,9,11,12,14,15,18,19,20,22,23,28,29,32,34,36,38,40,42,47,48,49,51,52,57,60,61,64,66,67,70,71,73,74,80,83,84,85,86]);
let v='';
v+=T(23,665,'<tspan fill="#d84040">总手: 4003万</tspan><tspan fill="#3cc">↓</tspan><tspan x="103" fill="#f4f430">MAVOL5: 4735万</tspan><tspan fill="#3cc">↓</tspan><tspan x="205" fill="#d8d8d8">MAVOL10: 4846万</tspan><tspan fill="#3cc">↓</tspan>','#ccc');
[671.500,711,751].forEach(y=>{v+=H(23,1615,y,DOT,'1 2')});
v+=T(1618,675.500,'7304','#aaa')+T(1618,715.500,'4890','#aaa')+T(1618,755.500,'2475','#aaa');
v+=V(23.5,650,792,LN)+V(1615.5,650,792,LN)+H(23,1668,650.5,LN);
VOL.forEach((z,n)=>{const i=n-4,x=X(i)+.5,y=Math.round(640+z/3);
 v+=cyanIdx.has(i)?`<rect x="${x-6.500}" y="${y}" width="13" height="${792-y}" fill="${CY}" shape-rendering="crispEdges"/>`:`<rect x="${x-6.500}" y="${y+.5}" width="13" height="${792-y-.5}" fill="none" stroke="${RD}" shape-rendering="crispEdges"/>`});
const z9=a=>a.map(q=>[+(q[0]/1.96).toFixed(1),+(640+q[1]/3).toFixed(1)]);
const z12=a=>a.map(q=>[+(800+q[0]/1.823).toFixed(1),+(640+q[1]/3).toFixed(1)]);
const yv=z9([[63,319],[100,325],[150,316],[200,321],[265,321],[330,340],[370,318],[430,305],[490,292],[540,312],[620,312],[720,320],[800,312],[850,292],[930,282],[980,292],[1090,290],[1180,305],[1300,307],[1400,300],[1480,292],[1568,288]]).concat(z12([[0,290],[60,302],[130,308],[180,294],[220,265],[260,248],[310,248],[370,255],[430,266],[520,275],[560,290],[620,285],[680,290],[740,280],[800,255],[860,258],[950,288],[1000,270],[1040,225],[1100,184],[1160,182],[1205,218],[1270,202],[1340,190],[1390,196],[1420,216]]));
const wv=z9([[63,319],[100,322],[150,312],[265,319],[330,332],[370,315],[430,310],[500,318],[600,310],[660,304],[720,315],[800,312],[850,303],[930,297],[1000,293],[1090,293],[1180,300],[1300,301],[1400,300],[1568,292]]).concat(z12([[0,295],[60,298],[160,297],[220,285],[300,275],[380,262],[470,260],[550,275],[640,283],[720,283],[800,262],[900,272],[980,270],[1040,248],[1110,238],[1160,222],[1240,205],[1280,190],[1330,190],[1380,206],[1420,216]]));
v+=PL(yv,'#ecec50',1)+PL(wv,'#f4f4f4',1);
v+=pen(p6('M360,752 L358,880 L352,930 L345,975 C350,930 390,915 408,945 C415,975 380,990 350,1000'));
v+=pen(p6('M310,816 C295,830 295,860 288,880 L290,945'));
document.getElementById('vl').innerHTML=v;

const M1=[-1,-1,684,655,635,635,635,650,660,617,590,578,578,588,605,625,657,672,686,708,724,724,737,760,787,800,815,828,820,805,785,752,735,735,728,706,740,748,760,762,770,775,765,752,762,770];
const M2=[733,718,710,700,688,697,745,803,823,820,825,792,765,732,714,704,684,652,640,647,651,656,683,683,698,737,742,725,706,718,708,705,705,680,662,648,628,605,608,613,605,607,630,664,692,699];
let m='';
m+=T(23,827,'<tspan fill="#c4c4c4">MACD(12,26,9)</tspan><tspan x="110" fill="#d84040">MACD: +3.12</tspan><tspan fill="#3cc">↓</tspan><tspan x="190" fill="#eee">DIFF: -10.94</tspan><tspan fill="#3cc">↓</tspan><tspan x="268" fill="#f4f430">DEA: -12.49</tspan><tspan fill="#e44">↑</tspan>','#ccc');
m+=H(23,1615,833.5,DOT)+H(23,1615,877.5,DOT,'1 2')+H(23,1615,935,DOT,'1 2');
m+=V(23.5,813,947,LN)+V(1615.5,813,947,LN)+H(23,1616,947.5,LN);
M1.concat(M2).forEach((z,n)=>{if(z<0)return;const i=n-4,x=X(i)+.5,y=640+z/3;m+=`<path d="M${x} 877V${y.toFixed(1)}" stroke="${z<712?'#d83c3c':'#22c822'}" shape-rendering="crispEdges"/>`});
const wm=z9([[63,795],[100,798],[150,765],[200,740],[260,724],[330,720],[370,682],[430,635],[480,615],[530,603],[570,606],[620,618],[660,623],[720,643],[790,652],[850,682],[900,715],[970,760],[1000,768],[1065,768],[1130,752],[1210,752],[1240,750],[1300,780],[1370,790],[1430,815],[1490,818],[1530,827],[1568,818]]).concat(z12([[0,816],[60,808],[150,796],[185,800],[250,870],[330,918],[400,904],[500,878],[560,840],[600,827],[680,820],[710,828],[740,826],[800,850],[840,858],[900,846],[940,850],[1020,845],[1100,805],[1170,758],[1230,738],[1290,710],[1330,712],[1380,735],[1420,736]]));
const ym=z9([[63,795],[100,798],[200,772],[340,742],[400,718],[530,655],[650,633],[800,643],[900,672],[1060,733],[1130,740],[1240,745],[1400,775],[1568,805]]).concat(z12([[0,805],[130,806],[200,808],[300,850],[390,880],[500,880],[600,860],[680,844],[770,835],[820,845],[920,850],[1020,845],[1130,825],[1210,790],[1290,757],[1370,742],[1420,742]]));
m+=PL(wm,'#f4f4f4',1)+PL(ym,'#eef03c',1);
m+=`<rect x="1550.500" y="814.500" width="65" height="19" fill="#000" stroke="${LN}"/>`+T(1558,828,'指标说明','#bdbdbd');
m+=T(1617,838,'+50.23','#c83030')+T(1617,882,'+0','#c83030')+T(1617,939,'-65.72','#22c822');
[[24,'05'],[272,'06'],[629,'07'],[1002,'08'],[1376,'09']].forEach(a=>{m+=T(a[0],959,a[1],'#b83030')});
document.getElementById('mc').innerHTML=m;

const RG='#8f0808';
let f='';
const rows=[[643,'3191','#c83030'],[666.700,'3179','#c83030'],[690.700,'3166','#c83030'],[715,'3154','#c83030'],[738.700,'3141','#c83030'],[762.700,'3129','#e8e8e8'],[785.700,'3116','#22c822'],[810,'3104','#22c822'],[833.700,'3091','#22c822'],[857.700,'3079','#22c822'],[882,'3066','#22c822']];
rows.forEach((r,i)=>{const w=(i==5||i==10)?(i==5?3:2):1;f+=`<path d="M1713 ${r[0]}H1876" stroke="${i==5?'#a50c0c':RG}" stroke-width="${w}"/>`;
  f+=`<text x="1712" y="${r[0]+5}" text-anchor="end" font-size="13" fill="${r[2]}">${r[1]}</text>`;
  if(i==9||i==10)f+=`<text x="1911" y="${r[0]+5}" text-anchor="end" font-size="13" fill="#22c822">${i==9?'1.60%':'2.00%'}</text>`;
  else f+=`<text x="1914" y="${r[0]+5}" text-anchor="end" font-size="13" fill="${r[2]}">%</text>`;});
[[907,'5150'],[932,'3456'],[957.700,'1762']].forEach(a=>{f+=`<path d="M1713 ${a[0]}H1876" stroke="${RG}"/><text x="1712" y="${a[0]+5}" text-anchor="end" font-size="13" fill="#36b8d0">${a[1]}</text>`});
[1713,1754.500,1836,1876].forEach(x=>{f+=V(x,643,983,RG)});f+=V(1796,643,983,RG,2);
f+=H(1669,1677,650.5,LN)+`<rect x="1684" y="966" width="29" height="17" fill="none" stroke="${RG}"/><text x="1712" y="980" text-anchor="end" font-size="13" fill="#36b8d0">X100</text>`;
let seed=11;const rnd=()=>(seed=(seed*16807)%2147483647)/2147483647;
let bl=0,col='#55f0f0',alt=0;
for(let x=1714;x<=1875;x++){ if(bl--<=0){bl=2+rnd()*7|0;alt=1-alt;col=alt?'#55f0f0':'#ecec80';}
  const z=x-1660;const zz=z*3;let base=zz<175?990:zz<300?1048:zz<450?1040:1100;let t=base+rnd()*rnd()*70-15;
  if(zz>560&&zz<640)t=1092+rnd()*22;
  f+=`<path d="M${x}.5 983V${(600+t/3).toFixed(1)}" stroke="${col}"/>`}
f+=V(1716,882,983,'#f0f0a0',1.5)+V(1795.500,898,983,'#7ef0f0',1.5)+V(1875,917,983,'#f0f090',1.5)+V(1859.500,947,983,'#55f0f0');
const z8=a=>a.map(q=>[+(1660+q[0]/3).toFixed(1),+(600+q[1]/3).toFixed(1)]);
f+=PL(z8([[162,545],[170,480],[175,540],[182,460],[190,500],[200,510],[210,505],[222,548],[235,500],[245,525],[258,520],[272,545],[288,582],[305,530],[315,510],[328,550],[335,490],[342,470],[347,395],[360,365],[365,335],[375,360],[390,330],[405,395],[415,350],[425,385],[435,405],[450,335],[465,375],[480,380],[495,355],[510,325],[525,355],[540,385],[555,360],[565,320],[572,330]]),'#f4f4f4',1);
document.getElementById('fs').innerHTML=f;

let p='';
const L=1863,R=1888;
p+=`<defs><linearGradient id="gr"><stop offset="0" stop-color="#fff"/><stop offset="1" stop-color="#f00"/></linearGradient><linearGradient id="gy"><stop offset="0" stop-color="#fff"/><stop offset="1" stop-color="#ff0"/></linearGradient><linearGradient id="gg"><stop offset="0" stop-color="#fff"/><stop offset="1" stop-color="#0f0"/></linearGradient><linearGradient id="gb"><stop offset="0" stop-color="#fff"/><stop offset="1" stop-color="#00f"/></linearGradient></defs>`;
p+=T(1853,326,'Poi...','#aaa',{fs:12})+`<rect x="1884" y="312" width="17" height="14" fill="#dcdcdc"/>`;
p+=`<rect x="1851" y="335.500" width="49" height="19" fill="#efefef" stroke="#666"/><text x="1875.500" y="350" text-anchor="middle" font-size="13" fill="#111">退出</text>`;
p+=`<path d="M1850 356.500H1902M1850 410.500H1902M1850 537.500H1902M1850 713H1902M1850 745.500H1902" stroke="#c0c0c0"/>`;
p+=`<circle cx="${L}" cy="369" r="1.700" fill="#777"/><circle cx="${R}" cy="369" r="3.800" fill="#777"/><circle cx="${L}" cy="393" r="6" fill="#777"/><circle cx="${R}" cy="393" r="8" fill="#777"/>`;
[['gr','#f00',417],['gy','#ff0',441.600],['gg','#0f0',464.600],['gb','#00f',488.600],['',"#000",513]].forEach(a=>{p+=`<rect x="1854" y="${a[2]}" width="18" height="18" fill="${a[0]?'url(#'+a[0]+')':'#fff'}"/><rect x="1879" y="${a[2]}" width="18" height="18" fill="${a[1]}"/>`});
p+=`<path d="M1876.500 458V438H1900" fill="none" stroke="#888"/>`;
const ink='#333';
p+=`<path d="M1856 556c3-4 5-3 7 0s4 3 7-1" fill="none" stroke="${ink}"/><path d="M1884 562l9-11 3 2-8 10h-4z" fill="#fff" stroke="${ink}"/><path d="M1884 562l4 1" stroke="#999" stroke-width="2"/>`;
p+=`<path d="M1856 583l15-10" stroke="${ink}"/><path d="M1880 577h15M1891 573l4 4-4 4" fill="none" stroke="${ink}"/>`;
p+=`<rect x="1855" y="598" width="16" height="9" fill="#fff" stroke="${ink}"/><rect x="1880" y="597" width="16" height="10" fill="#aaa"/>`;
p+=`<ellipse cx="${L}" cy="626" rx="8" ry="5" fill="#fff" stroke="${ink}"/><ellipse cx="${R}" cy="626" rx="8" ry="5" fill="#aaa"/>`;
p+=`<path d="M1856 650h15M1859 647l-3 3 3 3M1868 647l3 3-3 3" fill="none" stroke="${ink}"/><text x="${R}" y="657" text-anchor="middle" font-size="18" fill="#222">A</text>`;
p+=`<path d="M1857 674l4 4 7-9" fill="none" stroke="#2aa02a" stroke-width="2.500"/><path d="M1884 670l8 8M1892 670l-8 8" stroke="#d01818" stroke-width="3"/>`;
p+=`<path d="M1857 694h11v10M1857 694v10h11" fill="none" stroke="${ink}" stroke-dasharray="1 1"/><path d="M1854 704h18M1871 689v17" stroke="${ink}"/><rect x="1880" y="692" width="11" height="10" fill="#fff" stroke="#667"/><path d="M1883 697h5M1885.500 694.500v5" stroke="#334"/><path d="M1892 702l4 4" stroke="#a66" stroke-width="2"/>`;
p+=`<path d="M1856 730h14M1863 723v14" stroke="#9090d0" stroke-width="3.500"/><path d="M1881 730h14" stroke="#9090d0" stroke-width="3.500"/>`;
p+=`<path d="M1857 762c2-4 10-4 10 1s-5 4-6 3" fill="none" stroke="#666" stroke-width="1.500"/><path d="M1856 759l1 5 4-2z" fill="#666"/><path d="M1883 757h10l-1 12h-8zM1882 757h12M1886 755h4" fill="#555" stroke="#333"/><path d="M1886 759v9M1888 759v9M1890 759v9" stroke="#ddd"/>`;
p+=`<path d="M1857 779h8l4 4v9h-12z" fill="#fff" stroke="#111" stroke-width="1.200"/><path d="M1882 780h7v7h-7z" fill="#fff" stroke="#336"/><path d="M1886 784h8v8h-8z" fill="#ccd" stroke="#336"/>`;
p+=`<rect x="1856" y="806" width="15" height="8" fill="#777"/><rect x="1859" y="802" width="9" height="5" fill="#fff" stroke="#555"/><rect x="1859" y="814" width="9" height="3" fill="#fff" stroke="#555"/>`;
p+=`<rect x="1881" y="803" width="14" height="14" fill="#554f70"/><rect x="1884" y="803" width="8" height="5" fill="#cfc8e0"/><rect x="1884" y="811" width="8" height="6" fill="#222"/>`;
p+=`<rect x="1857" y="829" width="13" height="9" fill="#d8d8e8" stroke="#889"/><path d="M1860 833h4M1852 838h2" stroke="#667"/><circle cx="${R}" cy="834" r="8" fill="#20a0d0"/><text x="${R}" y="838.500" text-anchor="middle" font-size="12" font-weight="700" fill="#fff">i</text>`;
document.getElementById('pal').innerHTML=p;
})();
</script>
</body>
</html>
